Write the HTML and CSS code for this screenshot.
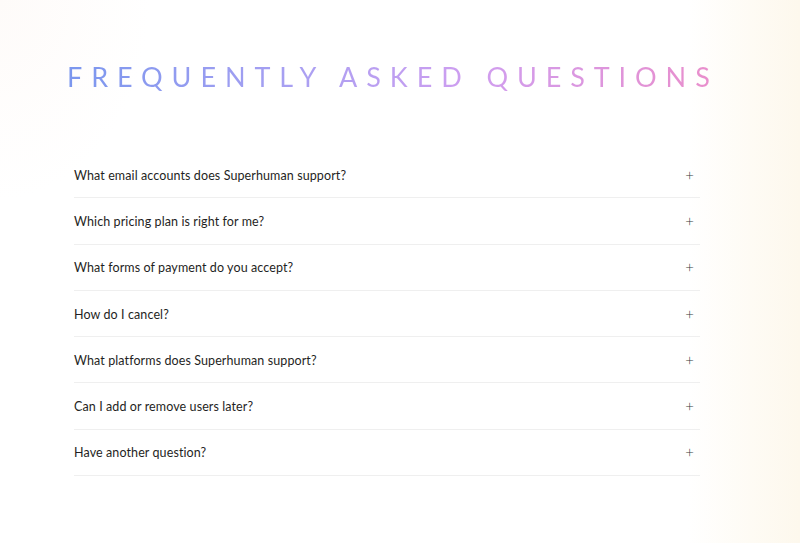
FILE: index.html
```html
<!DOCTYPE html>
<html lang="en">
<head>
<meta charset="utf-8">
<title>FAQ</title>
<link rel="stylesheet" href="styles.css">
</head>
<body>
<main class="page">
  <h1 class="title">FREQUENTLY ASKED QUESTIONS</h1>
  <ul class="faq">
    <li class="item"><span class="q">What email accounts does Superhuman support?</span><span class="plus">+</span></li>
    <li class="item"><span class="q">Which pricing plan is right for me?</span><span class="plus">+</span></li>
    <li class="item"><span class="q">What forms of payment do you accept?</span><span class="plus">+</span></li>
    <li class="item"><span class="q">How do I cancel?</span><span class="plus">+</span></li>
    <li class="item"><span class="q">What platforms does Superhuman support?</span><span class="plus">+</span></li>
    <li class="item"><span class="q">Can I add or remove users later?</span><span class="plus">+</span></li>
    <li class="item"><span class="q">Have another question?</span><span class="plus">+</span></li>
  </ul>
</main>
</body>
</html>
```
FILE: styles.css
```css
html, body {
  margin: 0;
  padding: 0;
  height: 100%;
}
body {
  font-family: Lato, "Open Sans", sans-serif;
  color: #1f1f24;
  background:
    radial-gradient(ellipse 150px 200px at 0 0, rgba(253, 246, 242, 0.45), rgba(255,255,255,0) 100%),
    linear-gradient(90deg, #ffffff 0%, #ffffff 86%, #fefbf4 94%, #fdf8ed 100%);
  overflow: hidden;
}
.page {
  padding: 60px 0 0 67px;
  width: 660px;
}
.title {
  margin: 0;
  font-weight: 400;
  font-size: 27px;
  line-height: 34px;
  letter-spacing: 0.33em;
  white-space: nowrap;
  background: linear-gradient(90deg, #7b97ee 0%, #a9a0f2 35%, #cf9ef0 62%, #ea8ecb 100%);
  -webkit-background-clip: text;
  background-clip: text;
  color: transparent;
  display: inline-block;
}
.faq {
  list-style: none;
  margin: 58px 0 0 7px;
  padding: 0;
  width: 626px;
}
.item {
  display: flex;
  align-items: center;
  justify-content: space-between;
  height: 45.3px;
  border-bottom: 1px solid #efefef;
  font-size: 12.5px;
}
.q {
  letter-spacing: 0.1px;
  padding-top: 1px;
}
.plus {
  font-size: 15px;
  color: #3a3a3a;
  margin-right: 6px;
  font-weight: 300;
}
```
